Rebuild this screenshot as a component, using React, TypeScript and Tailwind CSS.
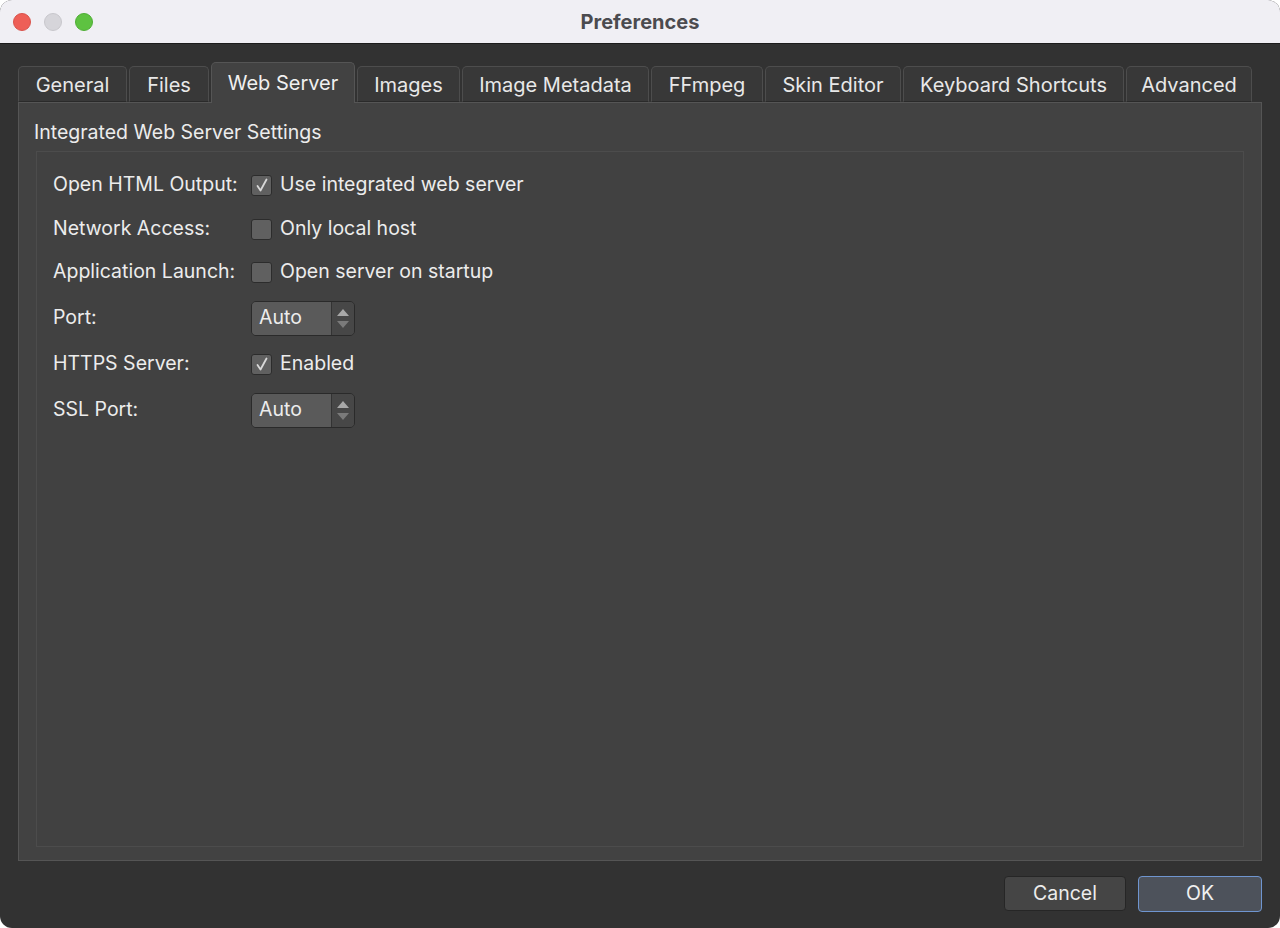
import React from 'react';

const tabs = [
  { label: 'General', w: 'w-[109px]' },
  { label: 'Files', w: 'w-[80px]' },
  { label: 'Web Server', w: 'w-[144px]', active: true },
  { label: 'Images', w: 'w-[103px]' },
  { label: 'Image Metadata', w: 'w-[187px]' },
  { label: 'FFmpeg', w: 'w-[112px]' },
  { label: 'Skin Editor', w: 'w-[136px]' },
  { label: 'Keyboard Shortcuts', w: 'w-[221px]' },
  { label: 'Advanced', w: 'w-[126px]' },
];

const Check = ({ checked }: { checked?: boolean }) => (
  <div className="w-[21px] h-[21px] rounded-[3px] border border-[#2c2c2c] bg-[#606060] flex items-center justify-center">
    {checked && (
      <svg width="14" height="15" viewBox="0 0 14 15" fill="none">
        <path d="M2.5 8 L5.5 12.5 L11.5 1.5" stroke="#d8d8d8" strokeWidth="1.8" strokeLinecap="round" strokeLinejoin="round" />
      </svg>
    )}
  </div>
);

const Spin = ({ value }: { value: string }) => (
  <div className="flex w-[104px] h-[35px] rounded-[5px] border border-[#2a2a2a] overflow-hidden">
    <div className="flex-1 bg-[#5a5a5a] flex items-center pl-[7px] text-[19.5px] text-[#ececec]">{value}</div>
    <div className="w-[23px] bg-[#474747] border-l border-[#333] flex flex-col items-center justify-center gap-[5px]">
      <svg width="12" height="7" viewBox="0 0 12 7"><path d="M0 7 L6 0 L12 7 Z" fill="#a8a8a8" /></svg>
      <svg width="12" height="7" viewBox="0 0 12 7"><path d="M0 0 L6 7 L12 0 Z" fill="#7a7a7a" /></svg>
    </div>
  </div>
);

const Row = ({ label, mt, children }: { label: string; mt: string; children: React.ReactNode }) => (
  <div className={`flex items-center h-[34px] ${mt}`}>
    <div className="w-[198px] text-[19.5px] text-[#ececec]">{label}</div>
    {children}
  </div>
);

const CheckRow = ({ checked, text }: { checked?: boolean; text: string }) => (
  <div className="flex items-center gap-[8px]">
    <Check checked={checked} />
    <span className="text-[19.5px] text-[#ececec]">{text}</span>
  </div>
);

export default function App() {
  return (
    <div className="w-[1280px] h-[928px] bg-white" style={{ fontFamily: 'Inter, "Noto Sans", sans-serif' }}>
      <div className="w-full h-full bg-[#323232] rounded-[12px] overflow-hidden flex flex-col">
        {/* title bar */}
        <div className="h-[44px] bg-[#f0eff4] border-b border-[#1c1c1c] flex items-center relative">
          <div className="flex gap-[13px] pl-[13px]">
            <div className="w-[18px] h-[18px] rounded-full bg-[#ee5f57] border border-[#d9534c]" />
            <div className="w-[18px] h-[18px] rounded-full bg-[#d6d5da] border border-[#c8c7cc]" />
            <div className="w-[18px] h-[18px] rounded-full bg-[#5ec241] border border-[#4fae36]" />
          </div>
          <div className="absolute inset-0 flex items-center justify-center text-[20px] font-bold text-[#4b4b4f] pointer-events-none">
            Preferences
          </div>
        </div>

        {/* tabs */}
        <div className="pl-[18px] pt-[18px] flex items-end gap-[2px] h-[58px] relative z-10">
          {tabs.map((t) =>
            t.active ? (
              <div
                key={t.label}
                className={`${t.w} h-[41px] mb-[-1px] bg-[#424242] border border-[#555] border-b-0 rounded-t-[5px] flex items-center justify-center text-[20px] text-[#f0f0f0]`}
              >
                {t.label}
              </div>
            ) : (
              <div
                key={t.label}
                className={`${t.w} h-[36px] bg-[#383838] border border-[#4d4d4d] border-b-[#2a2a2a] rounded-t-[5px] flex items-center justify-center text-[20px] text-[#e8e8e8] pt-[2px]`}
              >
                {t.label}
              </div>
            )
          )}
        </div>

        {/* pane */}
        <div className="mx-[18px] h-[759px] bg-[#424242] border border-[#555] flex flex-col px-[17px]">
          <div className="h-[48px] flex items-center text-[19.5px] text-[#ececec] -ml-[2px] pt-[12px]">Integrated Web Server Settings</div>
          <div className="flex-1 mb-[13px] border border-[#4c4c4c] bg-[#414141] pl-[16px] pt-[16px]">
            <Row label="Open HTML Output:" mt="">
              <CheckRow checked text="Use integrated web server" />
            </Row>
            <Row label="Network Access:" mt="mt-[10px]">
              <CheckRow text="Only local host" />
            </Row>
            <Row label="Application Launch:" mt="mt-[9px]">
              <CheckRow text="Open server on startup" />
            </Row>
            <Row label="Port:" mt="mt-[12px]">
              <Spin value="Auto" />
            </Row>
            <Row label="HTTPS Server:" mt="mt-[12px]">
              <CheckRow checked text="Enabled" />
            </Row>
            <Row label="SSL Port:" mt="mt-[12px]">
              <Spin value="Auto" />
            </Row>
          </div>
        </div>

        {/* buttons */}
        <div className="flex justify-end gap-[12px] pr-[18px] pt-[15px]">
          <button className="w-[122px] h-[35px] rounded-[4px] bg-[#454545] border border-[#262626] text-[19.5px] text-[#ececec]">
            Cancel
          </button>
          <button className="w-[124px] h-[36px] rounded-[4px] bg-[#4d525b] border border-[#6f95cf] text-[19.5px] text-[#f0f0f0]">
            OK
          </button>
        </div>
      </div>
    </div>
  );
}
